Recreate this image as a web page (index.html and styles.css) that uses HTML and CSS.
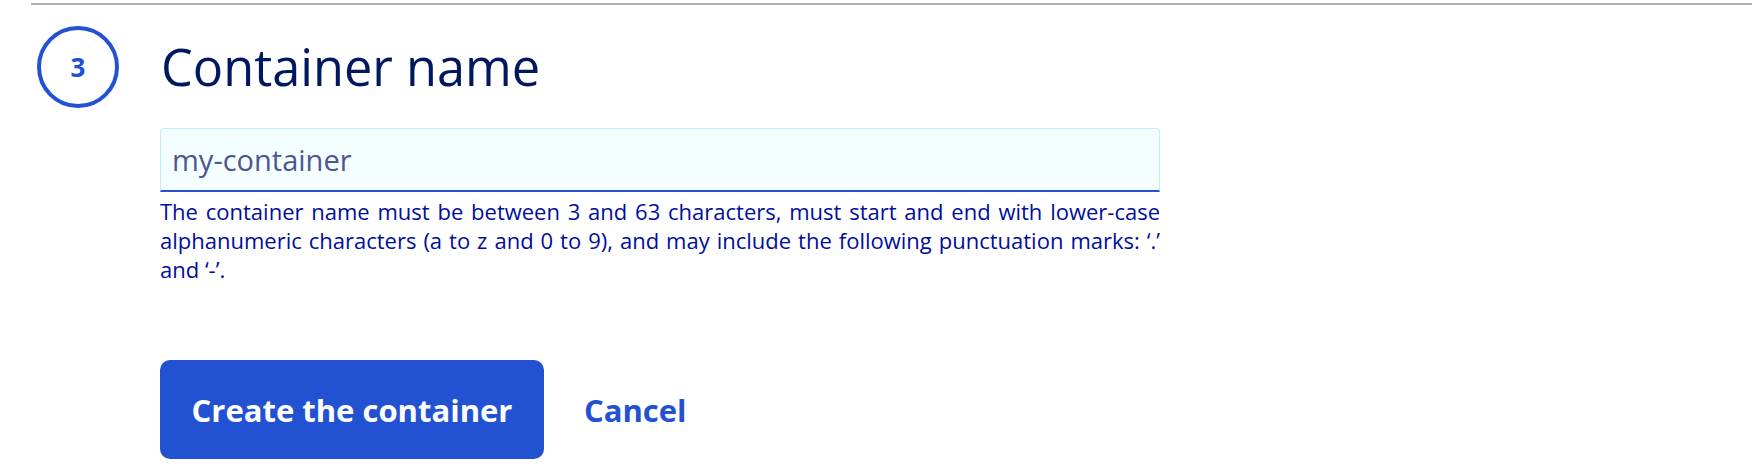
FILE: index.html
```html
<!DOCTYPE html>
<html lang="en">
<head>
<meta charset="utf-8">
<title>Container name</title>
<link rel="stylesheet" href="styles.css">
</head>
<body>
<div class="page">
  <div class="rule"></div>
  <div class="step">
    <div class="step-badge">3</div>
    <h2 class="step-title">Container name</h2>
  </div>
  <div class="step-body">
    <div class="field">
      <input class="field-input" type="text" value="my-container">
    </div>
    <p class="field-help">The container name must be between 3 and 63 characters, must start and end with lower-case alphanumeric characters (a to z and 0 to 9), and may include the following punctuation marks: ‘.’ and ‘-’.</p>
    <div class="actions">
      <button class="btn-primary" type="button">Create the container</button>
      <a class="btn-link" href="#">Cancel</a>
    </div>
  </div>
</div>
</body>
</html>
```
FILE: styles.css
```css
html, body {
  margin: 0;
  padding: 0;
  background: #ffffff;
}

body {
  font-family: "Open Sans", "Noto Sans", sans-serif;
  overflow: hidden;
}

.page {
  padding: 3px 0 0 31px;
}

.rule {
  height: 2px;
  background: #b1b1b1;
}

.step {
  display: flex;
  align-items: center;
  margin-top: 21px;
}

.step-badge {
  width: 74px;
  height: 74px;
  border: 4px solid #2252d1;
  border-radius: 50%;
  margin-left: 6px;
  display: flex;
  align-items: center;
  justify-content: center;
  color: #2252d1;
  font-weight: 700;
  font-size: 26px;
  line-height: 1;
}

.step-title {
  margin: 0 0 0 42px;
  font-size: 50.5px;
  font-weight: 400;
  color: #00185e;
  line-height: 1.2;
}

.step-body {
  margin-left: 129px;
  width: 1000px;
}

.field {
  margin-top: 20px;
}

.field-input {
  box-sizing: border-box;
  display: block;
  width: 1000px;
  height: 64px;
  margin: 0;
  padding: 0 10px 0 11px;
  border: 1px solid #bdeefc;
  border-bottom: 2px solid #2252d1;
  border-radius: 4px 4px 0 0;
  background: #f5feff;
  font-family: "Open Sans", "Noto Sans", sans-serif;
  font-size: 29px;
  color: #4d5693;
  outline: none;
}

.field-help {
  margin: 5px 0 0 0;
  font-size: 22px;
  line-height: 29px;
  color: #000e9c;
  text-align: justify;
}

.actions {
  display: flex;
  align-items: center;
  margin-top: 76px;
}

.btn-primary {
  box-sizing: border-box;
  width: 384px;
  height: 99px;
  border: none;
  border-radius: 10px;
  background: #2252d1;
  color: #ffffff;
  font-family: "Open Sans", "Noto Sans", sans-serif;
  font-weight: 700;
  font-size: 31px;
  cursor: pointer;
}

.btn-link {
  margin-left: 40px;
  color: #2252d1;
  font-weight: 700;
  font-size: 31px;
  text-decoration: none;
}
```
